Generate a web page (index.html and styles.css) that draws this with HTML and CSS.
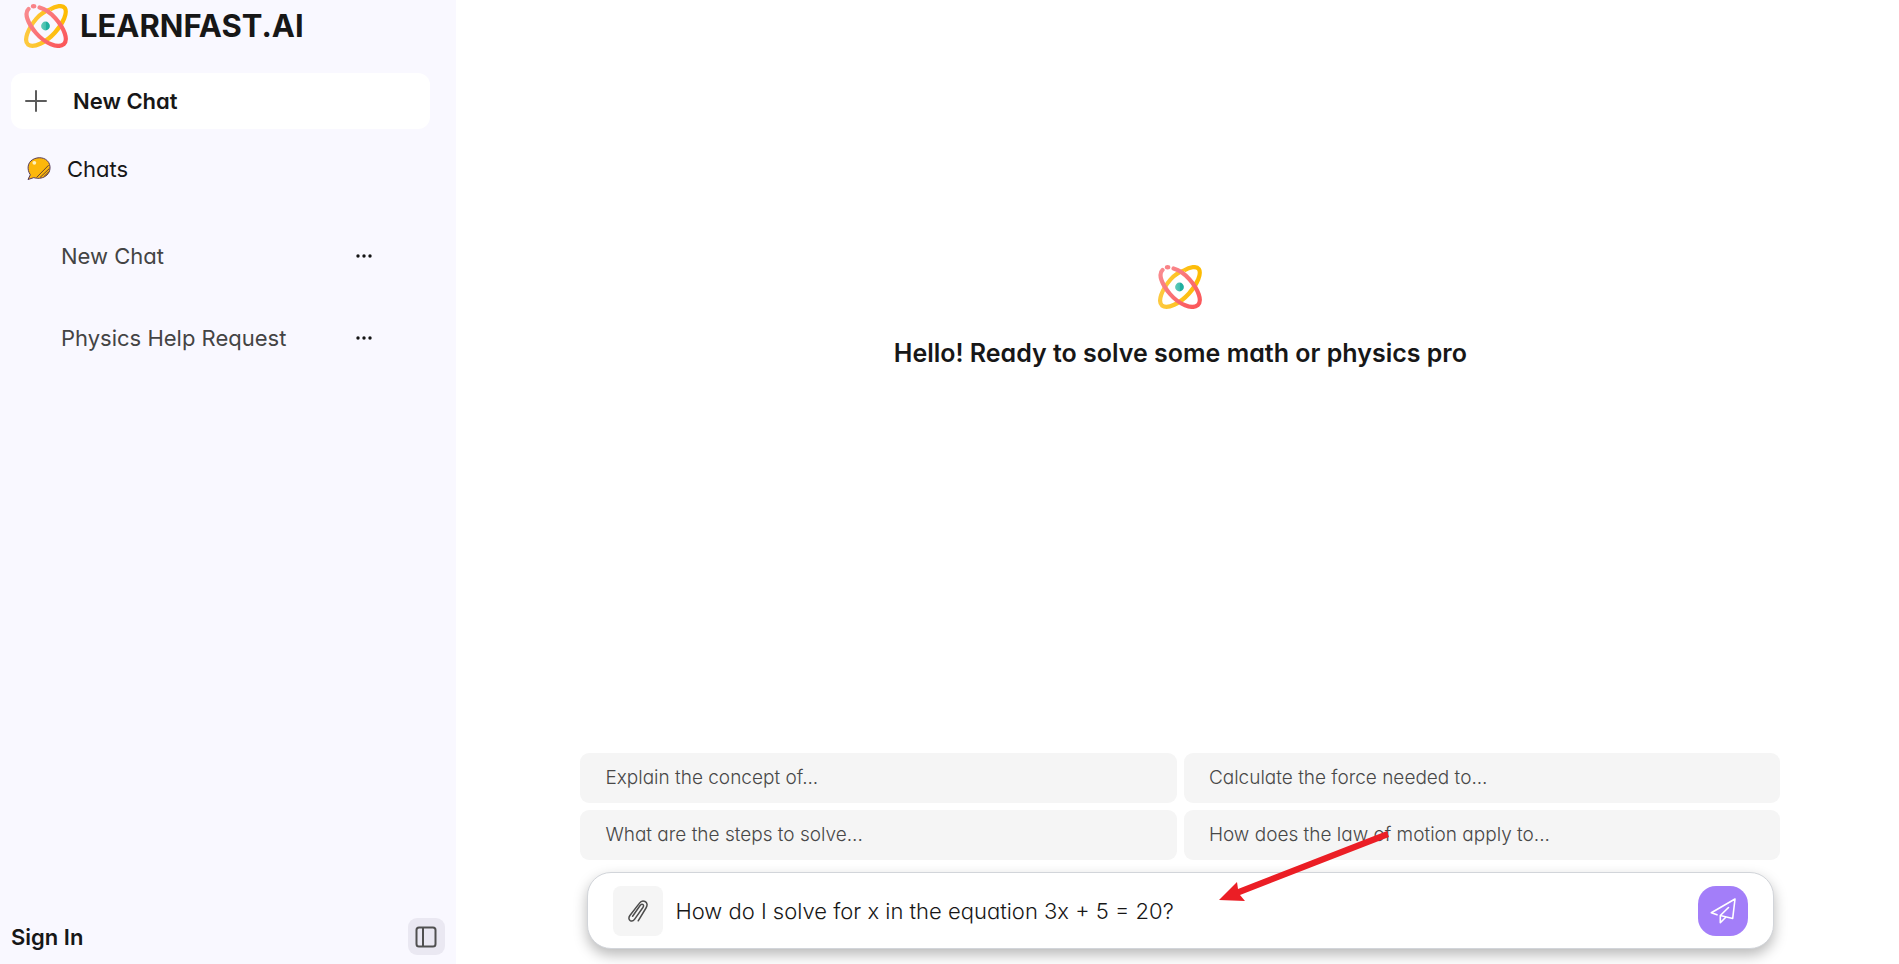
FILE: index.html
```html
<!DOCTYPE html>
<html lang="en">
<head>
<meta charset="utf-8">
<title>LEARNFAST.AI</title>
<link rel="stylesheet" href="styles.css">
</head>
<body>
<svg class="defs" width="0" height="0" aria-hidden="true">
  <defs>
    <linearGradient id="coral" x1="0" y1="0" x2="1" y2="1"><stop offset="0" stop-color="#f98c90"/><stop offset="1" stop-color="#fb5558"/></linearGradient>
    <linearGradient id="gold" x1="0" y1="0" x2="1" y2="0"><stop offset="0" stop-color="#fdc93f"/><stop offset="1" stop-color="#fdbb02"/></linearGradient>
    <linearGradient id="teal" x1="0" y1="0" x2="1" y2="0"><stop offset="0" stop-color="#62cbb9"/><stop offset="0.5" stop-color="#46bfaf"/><stop offset="0.6" stop-color="#1faf9f"/><stop offset="1" stop-color="#1faf9f"/></linearGradient>
    <symbol id="atom" viewBox="0 0 44 44">
      <path d="M26 5.500C32 1.500 38.500 1 40.800 4C43.800 8.500 39.500 19 31 28.500C22 38.500 9.500 44.500 4 40.500C-.5 36.500 3.500 25 12.500 14.500C16.500 10 21 7 26 5.500" fill="none" stroke="url(#gold)" stroke-width="4.200"/>
      <path d="M4.500 5C0 9 3.500 19 12 29C21 39.500 34 44.800 39.800 40.200C44.500 36 40.500 24.500 31.500 14.300C26.500 8.600 21 5.200 15.500 3.500" fill="none" stroke="url(#coral)" stroke-width="4.200" stroke-linecap="round"/>
      <ellipse cx="9.600" cy="2.200" rx="2.700" ry="2.200" fill="#f98287"/>
      <circle cx="21.500" cy="22" r="4.400" fill="url(#teal)"/>
    </symbol>
  </defs>
</svg>
<div class="app">
  <aside class="sidebar">
    <a class="brand" href="#"><svg class="atom"><use href="#atom"/></svg><span>LEARNFAST.AI</span></a>
    <button class="new-chat" type="button">
      <svg width="22" height="22" viewBox="0 0 22 22" fill="none" stroke="#5c5c5c" stroke-width="2" stroke-linecap="round"><path d="M11 1V21M1 11H21"/></svg>
      <span>New Chat</span>
    </button>
    <h2 class="section">
      <svg width="24" height="24" viewBox="0 0 24 24"><path d="M1 22.500L3.300 17.800C-.5 12 .8 5.500 5.500 2.700C11-.6 18.500.2 21.700 5.500C24.500 10.500 22.700 16.500 18.500 19.200C14.500 21.800 10 21.700 6.800 20.600Z" fill="#fcb70b" stroke="#573a5a"/><path d="M9.500 20.500L21.600 8.200M13 20.500L22.400 11.500M17.500 19L22 14.500" stroke="#684234"/><circle cx="7.300" cy="5.800" r="1.900" fill="#fff2bd"/></svg>
      <span>Chats</span>
    </h2>
    <ul class="history">
      <li><a href="#">New Chat</a><button type="button" aria-label="New Chat options"><svg width="18" height="6" viewBox="0 0 18 6" fill="#141414"><circle cx="3" cy="3" r="1.700"/><circle cx="9" cy="3" r="1.700"/><circle cx="15" cy="3" r="1.700"/></svg></button></li>
      <li><a href="#">Physics Help Request</a><button type="button" aria-label="Physics Help Request options"><svg width="18" height="6" viewBox="0 0 18 6" fill="#141414"><circle cx="3" cy="3" r="1.700"/><circle cx="9" cy="3" r="1.700"/><circle cx="15" cy="3" r="1.700"/></svg></button></li>
    </ul>
    <div class="account">
      <a href="#">Sign In</a>
      <button type="button" aria-label="Toggle sidebar"><svg width="22" height="22" viewBox="0 0 22 22" fill="none" stroke="#505050" stroke-width="2"><rect x="1.500" y="1.500" width="19" height="19" rx="2.500"/><path d="M8 2V20"/></svg></button>
    </div>
  </aside>
  <main class="main">
    <div class="welcome">
      <svg class="atom"><use href="#atom"/></svg>
      <h1>Hello! Ready to solve some math or physics pro</h1>
    </div>
    <div class="dock">
      <div class="suggestions">
        <button type="button">Explain the concept of...</button>
        <button type="button">Calculate the force needed to...</button>
        <button type="button">What are the steps to solve...</button>
        <button type="button">How does the law of motion apply to...</button>
      </div>
      <form class="composer">
        <button class="attach" type="button" aria-label="Attach a file"><svg width="20" height="22" viewBox="0 0 20 22" fill="none" stroke="#4c4c4c" stroke-width="1.500" stroke-linecap="round" stroke-linejoin="round"><path d="M10.200 20.800L18 8C19.800 5 19.200 2.600 17 1.500C14.800.4 12.800 1.200 11.300 3.400L1.900 15.500C.4 17.700.7 19.600 2.200 20.600C3.800 21.500 5.400 20.900 6.500 19.300L14.900 7.500C15.900 6 15.700 4.900 14.700 4.400C13.700 4 12.800 4.500 12.100 5.500L4.600 16.200"/></svg></button>
        <input type="text" aria-label="Message" value="How do I solve for x in the equation 3x + 5 = 20?">
        <button class="send" type="submit" aria-label="Send"><svg width="26" height="26" viewBox="0 0 26 26" fill="none" stroke="#fff" stroke-width="1.600" stroke-linecap="round" stroke-linejoin="round"><path d="M7 16.800L1.300 14.700L25 1L22.700 20.500L10.300 17.500L18.500 9.500M10.300 17.500V24.700L15.500 19.500"/></svg></button>
      </form>
      <svg class="arrow" width="172" height="72" viewBox="0 0 172 72" fill="#eb1e25" aria-hidden="true"><path d="M1 70L19 52L20 59L169 1L171 7L22 65L27 71Z"/></svg>
    </div>
  </main>
</div>
</body>
</html>
```
FILE: styles.css
```css
* { box-sizing: border-box; }
body {
  margin: 0;
  background: #fff;
  color: #171717;
  font: 22px/28px Inter, "Liberation Sans", sans-serif;
  font-feature-settings: "cv11";
}
button, input { font: inherit; font-feature-settings: inherit; color: inherit; border: 0; }
button { padding: 0; background: none; cursor: pointer; }
a { color: inherit; text-decoration: none; }
svg { display: block; flex: none; }
.defs { position: absolute; }
.atom { width: 44px; height: 44px; }
.app { display: flex; min-height: 100vh; }

.sidebar {
  width: 24%;
  flex: none;
  display: flex;
  flex-direction: column;
  padding: 4px 11px 9px 11px;
  background: #f9f8ff;
}
.brand { display: flex; align-items: center; gap: 12px; padding-left: 13px; font-size: 31px; line-height: 44px; font-weight: 700; }
.new-chat {
  display: flex;
  align-items: center;
  gap: 26px;
  height: 56px;
  margin: 25px 15px 0 0;
  padding-left: 14px;
  border-radius: 12px;
  background: #fff;
  font-weight: 600;
}
.section { display: flex; align-items: center; gap: 16px; margin: 26px 0 0; padding-left: 16px; font-size: 22px; font-weight: 400; }
.history { margin: 32px 0 0; padding: 0; list-style: none; }
.history li { display: flex; align-items: center; justify-content: space-between; height: 82px; padding: 0 72px 0 50px; color: #444; }

.account { display: flex; align-items: center; justify-content: space-between; margin-top: auto; font-weight: 600; }
.account button { display: grid; place-items: center; width: 37px; height: 37px; border-radius: 9px; background: #eae8f2; }

.main { flex: 1; display: flex; flex-direction: column; align-items: center; justify-content: space-between; padding: 265px 60px 15px 66px; }
.welcome { display: flex; flex-direction: column; align-items: center; gap: 26px; }
.welcome h1 { margin: 0; font-size: 25px; line-height: 36px; font-weight: 600; }
.dock { position: relative; width: 100%; max-width: 1200px; }
.suggestions { display: grid; grid-template-columns: 1fr 1fr; gap: 7px; }
.suggestions button { height: 50px; padding: 0 25px; border-radius: 9px; background: #f5f5f5; color: #484848; font-size: 19px; font-weight: 300; text-align: left; }
.composer {
  display: flex;
  align-items: center;
  gap: 12px;
  height: 77px;
  margin: 12px 6px 0 7px;
  padding: 0 25px;
  border: 1px solid #d2d5da;
  border-radius: 24px;
  background: #fff;
  box-shadow: 0 6px 14px rgba(0, 0, 0, 0.28);
}
.composer input { flex: 1; min-width: 0; padding: 0; background: none; outline: 0; font-weight: 300; }
.attach, .send { display: grid; place-items: center; flex: none; width: 50px; height: 50px; border-radius: 8px; background: #f5f5f5; }
.send { border-radius: 18px; background: #a37ef9; }
.arrow { position: absolute; left: 638px; bottom: 47px; pointer-events: none; }
```
